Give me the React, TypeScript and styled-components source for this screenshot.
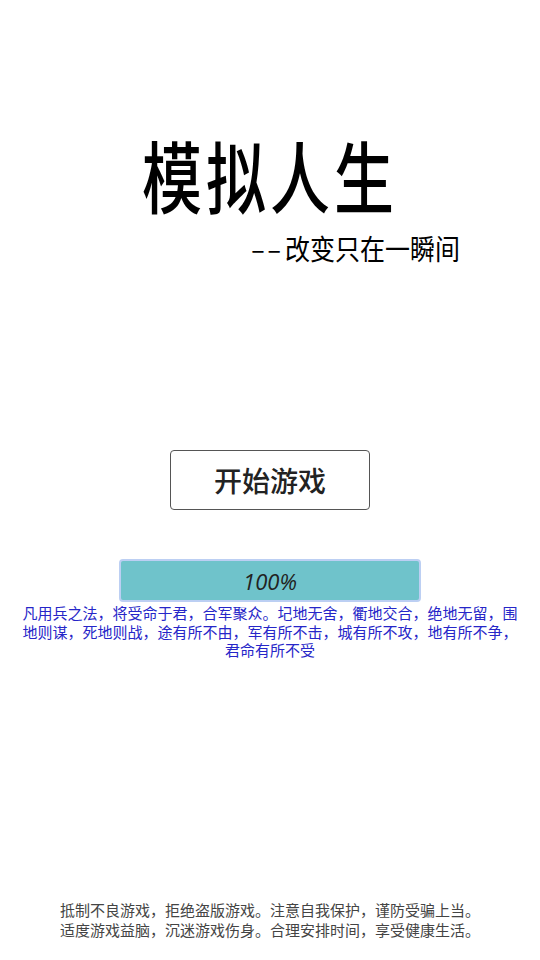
import React from "react";
import styled, { createGlobalStyle } from "styled-components";

const Global = createGlobalStyle`
  html, body { margin: 0; padding: 0; background: #fff; }
  body { font-family: "Noto Sans CJK SC", "Noto Sans", sans-serif; }
`;

const Page = styled.div`
  width: 540px;
  height: 960px;
  display: flex;
  flex-direction: column;
  align-items: center;
  background: #fff;
  overflow: hidden;
`;

const Title = styled.h1`
  margin: 144px 0 0;
  font-size: 60px;
  line-height: 60px;
  font-weight: 500;
  color: #000;
  letter-spacing: 4px;
  transform: scaleY(1.3);
`;

const SubtitleRow = styled.div`
  align-self: stretch;
  display: flex;
  justify-content: flex-end;
  padding-right: 80px;
  margin-top: 26px;
`;

const Subtitle = styled.div`
  font-size: 25px;
  line-height: 34px;
  font-weight: 400;
  color: #000;
  transform: scaleY(1.15);
`;

const Dash = styled.span`
  letter-spacing: 3px;
  margin-right: 1px;
`;

const StartButton = styled.button`
  margin-top: 186px;
  width: 200px;
  height: 60px;
  box-sizing: border-box;
  border: 1px solid #555;
  border-radius: 4px;
  background: #fff;
  font-family: "Noto Sans CJK SC", sans-serif;
  font-size: 28px;
  font-weight: 500;
  color: #222;
  padding: 0;
`;

const Progress = styled.div`
  margin-top: 49px;
  width: 302px;
  height: 43px;
  box-sizing: border-box;
  border: 2px solid #bccff3;
  border-radius: 4px;
  background: #6fc3cb;
  display: flex;
  align-items: center;
  justify-content: center;
  font-family: "Open Sans", "Noto Sans", sans-serif;
  font-style: italic;
  font-size: 22px;
  color: #222;
`;

const Quote = styled.p`
  margin: 2px 0 0;
  width: 500px;
  text-align: center;
  font-size: 15px;
  line-height: 18.5px;
  color: #2626c8;
`;

const Footer = styled.div`
  margin-top: auto;
  margin-bottom: 20px;
  text-align: center;
  font-size: 15px;
  line-height: 20px;
  color: #444;
`;

export default function App() {
  return (
    <>
      <Global />
      <Page>
        <Title>模拟人生</Title>
        <SubtitleRow>
          <Subtitle>
            <Dash>––</Dash>改变只在一瞬间
          </Subtitle>
        </SubtitleRow>
        <StartButton>开始游戏</StartButton>
        <Progress>100%</Progress>
        <Quote>
          凡用兵之法，将受命于君，合军聚众。圮地无舍，衢地交合，绝地无留，围地则谋，死地则战，途有所不由，军有所不击，城有所不攻，地有所不争，君命有所不受
        </Quote>
        <Footer>
          抵制不良游戏，拒绝盗版游戏。注意自我保护，谨防受骗上当。
          <br />
          适度游戏益脑，沉迷游戏伤身。合理安排时间，享受健康生活。
        </Footer>
      </Page>
    </>
  );
}
